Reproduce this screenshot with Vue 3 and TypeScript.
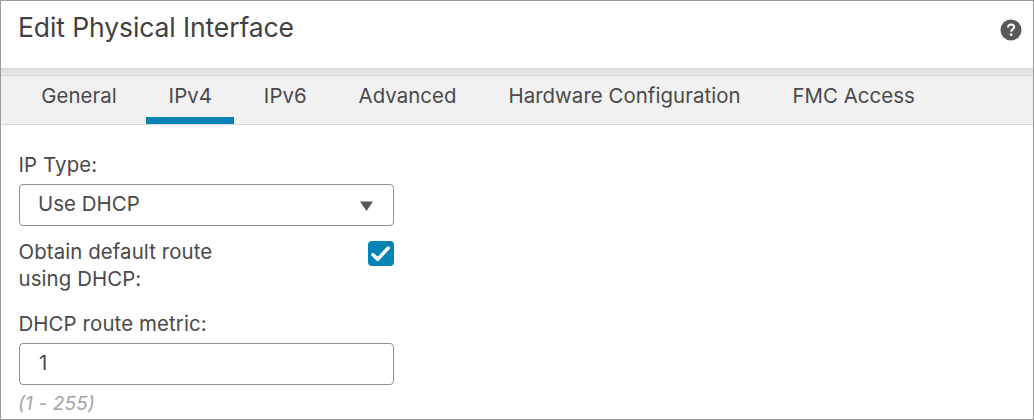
<script setup lang="ts">
import { ref } from "vue";

type Tab = {
  id: string;
  label: string;
};

const tabs: Tab[] = [
  { id: "general", label: "General" },
  { id: "ipv4", label: "IPv4" },
  { id: "ipv6", label: "IPv6" },
  { id: "advanced", label: "Advanced" },
  { id: "hardware", label: "Hardware Configuration" },
  { id: "fmc", label: "FMC Access" },
];

const ipTypes = ["Use DHCP", "Use Static IP", "Use PPPoE"];

const activeTab = ref("ipv4");
const ipType = ref("Use DHCP");
const obtainRoute = ref(true);
const metric = ref("1");
</script>

<template>
  <div class="dialog">
    <header class="dialog__header">
      <h1 class="dialog__title">Edit Physical Interface</h1>
      <button type="button" class="dialog__help" aria-label="Help">
        <svg width="22" height="22" viewBox="0 0 22 22">
          <circle cx="11" cy="11" r="10.5" fill="#58585b" />
          <path
            d="M8 8.5C8.1 6.5 9.4 5.4 11.1 5.4s3 1.1 3 2.7c0 2.2-2.9 2.3-2.9 4.6"
            fill="none"
            stroke="#fff"
            stroke-width="2"
          />
          <circle cx="11.2" cy="15.7" r="1.4" fill="#fff" />
        </svg>
      </button>
    </header>

    <div class="dialog__shade"></div>

    <nav class="tabs">
      <button
        v-for="tab in tabs"
        :key="tab.id"
        type="button"
        class="tabs__item"
        :class="{ 'tabs__item--active': tab.id === activeTab }"
        @click="activeTab = tab.id"
      >
        {{ tab.label }}
      </button>
    </nav>

    <main class="form">
      <label class="form__label" for="ip-type">IP Type:</label>
      <div class="select">
        <select id="ip-type" v-model="ipType" class="select__control">
          <option v-for="type in ipTypes" :key="type" :value="type">{{ type }}</option>
        </select>
        <svg class="select__arrow" width="13" height="10" viewBox="0 0 13 10">
          <path d="M0 .5h13L6.5 10z" fill="#58585b" />
        </svg>
      </div>

      <label class="check">
        <span class="check__text">Obtain default route using DHCP:</span>
        <input v-model="obtainRoute" type="checkbox" class="check__input" />
        <span class="check__box" :class="{ 'check__box--on': obtainRoute }">
          <svg v-if="obtainRoute" width="26" height="25" viewBox="0 0 26 25">
            <path
              d="M5 13.7l4.7 4.6L20.2 7"
              fill="none"
              stroke="#fff"
              stroke-width="3.5"
              stroke-linecap="round"
              stroke-linejoin="round"
            />
          </svg>
        </span>
      </label>

      <label class="form__label form__label--metric" for="metric">DHCP route metric:</label>
      <input id="metric" v-model="metric" type="text" class="form__input" />
      <p class="form__hint">(1 - 255)</p>
    </main>
  </div>
</template>

<style>
body {
  margin: 0;
  overflow: hidden;
}
</style>

<style scoped>
.dialog {
  box-sizing: border-box;
  height: 420px;
  border: 1px solid #9b9b9b;
  overflow: hidden;
  background: #fff;
  color: #49494b;
  font-family: Inter, "Liberation Sans", sans-serif;
  font-size: 20.4px;
  letter-spacing: 0.06px;
  line-height: 27px;
}

.dialog button,
.dialog input,
.dialog select {
  margin: 0;
  color: inherit;
  font: inherit;
  letter-spacing: inherit;
}

.dialog__header {
  display: flex;
  align-items: flex-start;
  justify-content: space-between;
  box-sizing: border-box;
  height: 67px;
  padding: 9px 11px 0 17px;
}

.dialog__title {
  margin: 0;
  color: #414143;
  font-size: 26.5px;
  font-weight: 400;
  letter-spacing: -0.1px;
  line-height: 34px;
}

.dialog .dialog__help {
  display: flex;
  margin-top: 9px;
  padding: 0;
  border: 0;
  background: none;
  cursor: pointer;
}

.dialog__shade {
  height: 7px;
  background: linear-gradient(#dadada, #e9e9e9);
}

.tabs {
  display: flex;
  gap: 7.5px;
  box-sizing: border-box;
  height: 50px;
  padding-left: 18px;
  border-top: 1px solid #d6d6d6;
  border-bottom: 1px solid #d6d6d6;
  background: #f1f1f1;
}

.tabs__item {
  height: 48px;
  padding: 0 22.2px 2px;
  border: 0;
  border-bottom: 7px solid transparent;
  background: none;
  white-space: nowrap;
  cursor: pointer;
}

.tabs__item--active {
  border-bottom-color: #0483b4;
}

.form {
  display: flex;
  flex-direction: column;
  width: 375px;
  padding: 26px 0 0 18px;
}

.form__label {
  display: block;
  height: 33px;
  margin-left: -0.5px;
  letter-spacing: 0.12px;
}

.form__label--metric {
  margin-top: 18px;
}

.form__input,
.select {
  box-sizing: border-box;
  height: 42px;
  border: 1px solid #8e8e90;
  border-radius: 4px;
  background: #fff;
}

.form__input {
  width: 100%;
  padding: 0 19px 4px;
}

.select {
  display: flex;
  align-items: center;
  padding-right: 20px;
}

.select__control {
  flex: 1;
  height: 40px;
  padding: 0 0 4px 18px;
  border: 0;
  background: none;
  appearance: none;
}

.select__arrow {
  margin-top: 2px;
}

.check {
  display: flex;
  align-items: flex-start;
  justify-content: space-between;
  margin-top: 12px;
  margin-left: -0.5px;
  letter-spacing: 0.1px;
}

.check__text {
  width: 210px;
}

.check__input {
  display: none;
}

.check__box {
  display: flex;
  box-sizing: border-box;
  width: 26px;
  height: 25px;
  margin-top: 3px;
  border: 1px solid #8e8e90;
  border-radius: 4px;
}

.check__box--on {
  border: 0;
  background: #0483b4;
}

.form__hint {
  margin: 5px 0 0 -1px;
  color: #a3a3a5;
  font-size: 19px;
  font-style: italic;
  letter-spacing: 0.15px;
}
</style>
